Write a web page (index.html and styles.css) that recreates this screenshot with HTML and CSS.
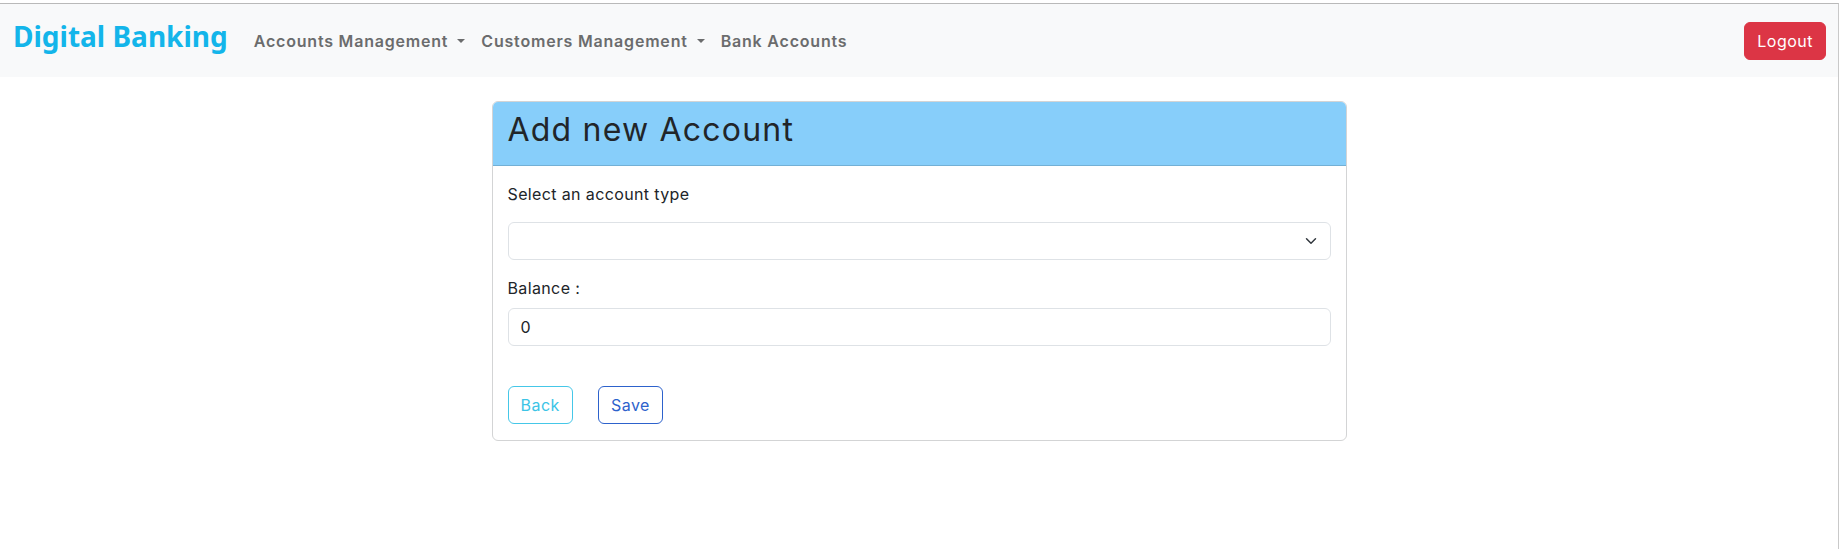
FILE: index.html
```html
<!DOCTYPE html>
<html lang="en">
<head>
<meta charset="utf-8">
<title>Digital Banking</title>
<link rel="stylesheet" href="styles.css">
</head>
<body>
<div class="page">
  <nav class="navbar">
    <div class="nav-left">
      <a class="brand" href="#">Digital Banking</a>
      <ul class="nav-links">
        <li><a class="nav-link dropdown" href="#">Accounts Management<span class="caret"></span></a></li>
        <li><a class="nav-link dropdown" href="#">Customers Management<span class="caret"></span></a></li>
        <li><a class="nav-link" href="#">Bank Accounts</a></li>
      </ul>
    </div>
    <button class="btn btn-danger">Logout</button>
  </nav>

  <div class="card">
    <div class="card-header">
      <h2>Add new Account</h2>
    </div>
    <div class="card-body">
      <label class="label label-first">Select an account type</label>
      <div class="select">
        <svg class="chevron" viewBox="0 0 16 16" width="16" height="12"><path d="m2 5 6 6 6-6" fill="none" stroke="#343a40" stroke-width="2" stroke-linecap="round" stroke-linejoin="round"/></svg>
      </div>
      <label class="label label-second">Balance :</label>
      <div class="input">0</div>
      <div class="actions">
        <button class="btn btn-outline-info">Back</button>
        <button class="btn btn-outline-primary">Save</button>
      </div>
    </div>
  </div>
</div>
</body>
</html>
```

FILE: styles.css
```css
* { box-sizing: border-box; }
html, body { margin: 0; padding: 0; background: #fff; }
body {
  padding-top: 3px;
  font-family: "Inter", "Open Sans", sans-serif;
  font-size: 16px;
  line-height: 1.5;
  color: #212529;
}
.page {
  width: 1839px;
  min-height: 546px;
  border-top: 1px solid #b9b9b9;
  border-right: 1px solid #c9c9c9;
}
.navbar {
  height: 73px;
  background: #f8f9fa;
  display: flex;
  align-items: center;
  justify-content: space-between;
  padding: 0 12px 0 13px;
}
.nav-left { display: flex; align-items: center; }
.brand {
  font-family: "Noto Sans", sans-serif;
  font-weight: 700;
  font-size: 28px;
  line-height: 36px;
  padding-bottom: 10px;
  color: #13b5ea;
  text-decoration: none;
  margin-right: 18px;
}
.nav-links { display: flex; list-style: none; margin: 0; padding: 0; }
.nav-link {
  display: flex;
  align-items: center;
  padding: 8px 8px;
  font-weight: 600;
  font-size: 16px;
  letter-spacing: 0.8px;
  color: #6b6c6d;
  text-decoration: none;
}
.caret {
  display: inline-block;
  margin-left: 9px;
  border-top: 4.5px solid #6b6c6d;
  border-left: 4.5px solid transparent;
  border-right: 4.5px solid transparent;
}
.btn {
  font-family: inherit;
  font-size: 16px;
  line-height: 24px;
  letter-spacing: 0.5px;
  padding: 6px 12px;
  border-radius: 6px;
  border: 1px solid transparent;
  background: transparent;
}
.btn-danger { background: #dc3545; border-color: #dc3545; color: #fff; }
.card {
  width: 855px;
  margin: 24px auto 0;
  border: 1px solid #d3d4d5;
  border-radius: 6px;
  overflow: hidden;
}
.card-header {
  background: #87cefa;
  border-bottom: 1px solid #73b0d5;
  padding: 8px 15px;
}
.card-header h2 {
  margin: 0 0 8px;
  font-size: 32px;
  font-weight: 400;
  letter-spacing: 1.2px;
  line-height: 39px;
}
.card-body { padding: 16px 15px; }
.label { display: block; line-height: 24px; letter-spacing: 0.37px; }
.label-first { margin-bottom: 16px; }
.label-second { margin-top: 16px; margin-bottom: 8px; }
.select, .input {
  height: 38px;
  border: 1px solid #dee2e6;
  border-radius: 6px;
  padding: 6px 12px;
  line-height: 24px;
}
.select { display: flex; align-items: center; justify-content: flex-end; padding-right: 11px; }
.actions { display: flex; gap: 25px; margin-top: 40px; }
.btn-outline-info { color: #3cc4e6; border-color: #45c7e8; }
.btn-outline-primary { color: #2d62cc; border-color: #2d62cc; }
```
